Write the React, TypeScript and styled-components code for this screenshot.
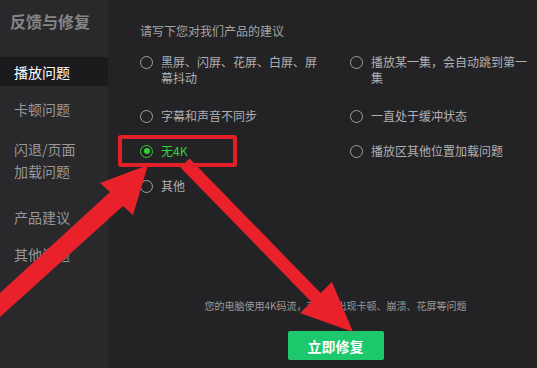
import styled, { createGlobalStyle } from 'styled-components';

const GlobalStyle = createGlobalStyle`
  html, body {
    margin: 0;
    padding: 0;
    background: #232326;
  }
  * {
    box-sizing: border-box;
  }
`;

const navItems = [
  { label: '播放问题', active: true, gap: 0 },
  { label: '卡顿问题', active: false, gap: 8 },
  { label: '闪退/页面\n加载问题', active: false, gap: 11 },
  { label: '产品建议', active: false, gap: 17 },
  { label: '其他问题', active: false, gap: 8 },
];

const options = [
  { label: '黑屏、闪屏、花屏、白屏、屏幕抖动', checked: false },
  { label: '播放某一集，会自动跳到第一集', checked: false },
  { label: '字幕和声音不同步', checked: false },
  { label: '一直处于缓冲状态', checked: false },
  { label: '无4K', checked: true },
  { label: '播放区其他位置加载问题', checked: false },
  { label: '其他', checked: false },
];

export default function App() {
  return (
    <>
      <GlobalStyle />
      <Window>
        <Sidebar>
          <SideTitle>反馈与修复</SideTitle>
          <NavList>
            {navItems.map((item) => (
              <NavItem key={item.label} $active={item.active} $gap={item.gap}>
                {item.label}
              </NavItem>
            ))}
          </NavList>
        </Sidebar>
        <Main>
          <Prompt>请写下您对我们产品的建议</Prompt>
          <OptionGrid>
            {options.map((opt) => (
              <Option key={opt.label} $checked={opt.checked}>
                <Radio $checked={opt.checked} />
                <OptionText>{opt.label}</OptionText>
              </Option>
            ))}
          </OptionGrid>
          <Footer>
            <Notice>您的电脑使用4K码流，可能会出现卡顿、崩溃、花屏等问题</Notice>
            <FixButton>立即修复</FixButton>
          </Footer>
        </Main>
        <Overlay viewBox="0 0 537 368" width="537" height="368">
          <polygon
            fill="#e8212b"
            points="189.6,158.5 320.6,293 332,282 353,332 300,313 311.4,302 180.4,167.5"
          />
          <polygon
            fill="#e8212b"
            points="0,293 110,192 100,183 148,165 133,215 123,206 0,317"
          />
          <rect x="120" y="137" width="115" height="28" fill="none" stroke="#e3202a" strokeWidth="4" rx="1" />
        </Overlay>
      </Window>
    </>
  );
}

const Window = styled.div`
  position: relative;
  width: 537px;
  height: 368px;
  display: flex;
  overflow: hidden;
  font-family: 'Noto Sans CJK SC', 'Noto Sans', sans-serif;
`;

const Sidebar = styled.div`
  width: 108px;
  flex-shrink: 0;
  background: #29292c;
  display: flex;
  flex-direction: column;
`;

const SideTitle = styled.div`
  padding: 10px 0 0 10px;
  font-size: 16px;
  line-height: 22px;
  font-weight: 700;
  color: #858585;
`;

const NavList = styled.div`
  margin-top: 25px;
  display: flex;
  flex-direction: column;
`;

const NavItem = styled.div<{ $active: boolean; $gap: number }>`
  margin-top: ${({ $gap }) => $gap}px;
  padding: 3.5px 8px 3.5px 14px;
  font-size: 14px;
  line-height: 22px;
  white-space: pre-line;
  color: ${({ $active }) => ($active ? '#ffffff' : '#989898')};
  background: ${({ $active }) => ($active ? '#1b1b1d' : 'transparent')};
`;

const Main = styled.div`
  flex: 1;
  background: #232326;
  padding: 22px 6px 8px 32px;
  display: flex;
  flex-direction: column;
`;

const Prompt = styled.div`
  font-size: 12px;
  line-height: 18px;
  color: #a3a3a3;
`;

const OptionGrid = styled.div`
  margin-top: 14px;
  display: grid;
  grid-template-columns: 210px 1fr;
  grid-template-rows: 54px 35px 35px 35px;
`;

const Option = styled.div<{ $checked: boolean }>`
  display: flex;
  align-items: flex-start;
  gap: 8px;
  color: ${({ $checked }) => ($checked ? '#37d23a' : '#b0b0b0')};
`;

const Radio = styled.span<{ $checked: boolean }>`
  width: 13px;
  height: 13px;
  margin-top: 1.5px;
  flex-shrink: 0;
  border-radius: 50%;
  border: 1.5px solid ${({ $checked }) => ($checked ? '#2fcf35' : '#a0a0a0')};
  display: flex;
  align-items: center;
  justify-content: center;
  &::after {
    content: '';
    width: 6px;
    height: 6px;
    border-radius: 50%;
    background: ${({ $checked }) => ($checked ? '#2fcf35' : 'transparent')};
  }
`;

const OptionText = styled.span`
  max-width: 158px;
  font-size: 12px;
  line-height: 16px;
`;

const Footer = styled.div`
  margin-top: auto;
  display: flex;
  flex-direction: column;
  align-items: center;
  gap: 18px;
`;

const Notice = styled.div`
  font-size: 10px;
  line-height: 14px;
  color: #9a9a9a;
`;

const FixButton = styled.button`
  width: 96px;
  height: 29px;
  border: none;
  border-radius: 2px;
  background: #1cc86b;
  color: #ffffff;
  font-family: inherit;
  font-size: 14px;
  font-weight: 700;
  padding: 0;
`;

const Overlay = styled.svg`
  position: absolute;
  left: 0;
  top: 0;
  pointer-events: none;
`;
